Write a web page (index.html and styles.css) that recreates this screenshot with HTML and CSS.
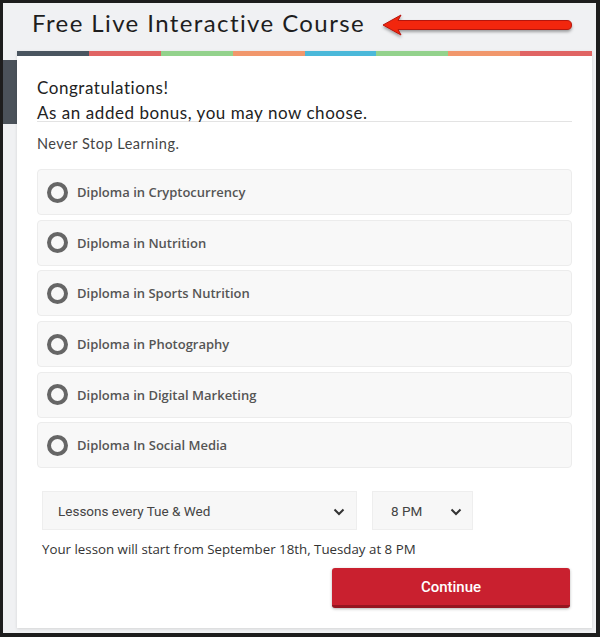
FILE: index.html
```html
<!DOCTYPE HTML><html>
<head>
  <title>Free Live Interactive Course</title>
  <meta name="viewport" content="width=device-width, initial-scale=1">
  <link rel="stylesheet" href="styles.css">
</head>
<body>
  <div class="page">
    <div class="topbar">
      <h1>Free Live Interactive Course</h1>
      <svg class="arrow" width="200" height="34" viewBox="0 0 200 34">
        <defs>
          <filter id="drop" x="-5%" y="-30%" width="110%" height="180%">
            <feDropShadow dx="0" dy="2" stdDeviation="1.5" flood-color="#000" flood-opacity="0.35"/>
          </filter>
        </defs>
        <path filter="url(#drop)" d="M2 16 L20 6 L17 11.5 L186 11.5 Q190.5 11.5 190.5 16 Q190.5 20.5 186 20.5 L17 20.5 L20 26 Z" fill="#f2280f" stroke="#b5150a" stroke-width="1" stroke-linejoin="round"/>
      </svg>
    </div>
    <div class="main">
      <div class="side"></div>
      <div class="card">
        <div class="stripe">
          <span class="s1"></span><span class="s2"></span><span class="s3"></span><span class="s4"></span>
          <span class="s5"></span><span class="s3"></span><span class="s4"></span><span class="s2"></span>
        </div>
        <div class="content">
          <div class="intro">
            <p>Congratulations!</p>
            <p>As an added bonus, you may now choose.</p>
          </div>
          <p class="tagline">Never Stop Learning.</p>
          <div class="options">
            <label class="option"><span class="radio"></span>Diploma in Cryptocurrency</label>
            <label class="option"><span class="radio"></span>Diploma in Nutrition</label>
            <label class="option"><span class="radio"></span>Diploma in Sports Nutrition</label>
            <label class="option"><span class="radio"></span>Diploma in Photography</label>
            <label class="option"><span class="radio"></span>Diploma in Digital Marketing</label>
            <label class="option"><span class="radio"></span>Diploma In Social Media</label>
          </div>
          <div class="selects">
            <div class="select days">
              <span>Lessons every Tue &amp; Wed</span>
              <svg class="chev" width="12" height="8" viewBox="0 0 12 8"><path d="M1.5 1.5 L6 6 L10.5 1.5" fill="none" stroke="#333" stroke-width="2"/></svg>
            </div>
            <div class="select time">
              <span>8 PM</span>
              <svg class="chev" width="12" height="8" viewBox="0 0 12 8"><path d="M1.5 1.5 L6 6 L10.5 1.5" fill="none" stroke="#333" stroke-width="2"/></svg>
            </div>
          </div>
          <p class="note">Your lesson will start from September 18th, Tuesday at 8 PM</p>
          <div class="actions">
            <button class="button">Continue</button>
          </div>
        </div>
      </div>
    </div>
  </div>
</body>
</html>
```

FILE: styles.css
```css
html {
  font-family: "Open Sans", Arial, sans-serif;
}
body {
  margin: 0;
  background-color: #1d1d1d;
}
p {
  margin: 0;
}
.page {
  margin: 3px 4px 4px 3px;
  height: 630px;
  background-color: #f0f1f3;
  overflow: hidden;
}
.topbar {
  height: 48px;
  display: flex;
  align-items: flex-start;
}
.topbar h1 {
  margin: 5px 0 0 29px;
  font-family: Lato, sans-serif;
  font-weight: 400;
  font-size: 24px;
  line-height: 30px;
  color: #1e1e1e;
  letter-spacing: 1.4px;
}
.arrow {
  margin: 6px 0 0 16px;
}
.main {
  display: flex;
  align-items: flex-start;
}
.side {
  width: 14px;
  height: 64px;
  margin-top: 9px;
  background-color: #4b525a;
}
.card {
  width: 575px;
  height: 577px;
  background-color: #fff;
  box-shadow: 0 1px 3px rgba(0,0,0,.12);
}
.stripe {
  display: flex;
  height: 5px;
}
.stripe span {
  flex: 1;
}
.s1 { background-color: #4a5560; }
.s2 { background-color: #e06463; }
.s3 { background-color: #93d28c; }
.s4 { background-color: #f1976c; }
.s5 { background-color: #4bb8d9; }
.content {
  padding: 0 20px;
}
.intro {
  padding-top: 21px;
  border-bottom: 1px solid #e3e3e3;
  font-family: Lato, sans-serif;
  font-size: 17px;
  line-height: 21px;
  color: #222;
  letter-spacing: 0.55px;
}
.intro p {
  margin-bottom: 4px;
}
.intro p:last-child {
  margin-bottom: -2px;
}
.tagline {
  margin-top: 12px;
  font-family: Lato, sans-serif;
  font-size: 14.5px;
  line-height: 20px;
  color: #444;
  letter-spacing: 0.5px;
}
.options {
  margin-top: 15px;
  display: flex;
  flex-direction: column;
  gap: 4.7px;
}
.option {
  height: 46px;
  box-sizing: border-box;
  display: flex;
  align-items: center;
  padding-left: 9px;
  background-color: #f8f8f8;
  border: 1px solid #ececec;
  border-radius: 4px;
  font-size: 13px;
  font-weight: 600;
  color: #555;
}
.radio {
  width: 21px;
  height: 21px;
  box-sizing: border-box;
  border: 4px solid #666;
  border-radius: 50%;
  margin-right: 9px;
}
.selects {
  display: flex;
  gap: 15px;
  margin: 23px 0 0 5px;
}
.select {
  height: 39px;
  box-sizing: border-box;
  display: flex;
  align-items: center;
  justify-content: space-between;
  background-color: #f7f7f7;
  border: 1px solid #eeeeee;
  font-family: Roboto, sans-serif;
  font-size: 13.5px;
  color: #444;
}
.days {
  width: 315px;
  padding: 0 11px 0 15px;
}
.time {
  width: 101px;
  padding: 0 10px 0 18px;
}
.chev {
  margin-top: 2px;
}
.note {
  margin: 9px 0 0 5px;
  font-size: 13.3px;
  line-height: 20px;
  color: #333;
}
.actions {
  display: flex;
  justify-content: flex-end;
  margin: 9px 2px 0 0;
}
.button {
  width: 238px;
  height: 40px;
  padding: 0;
  border: none;
  border-bottom: 3px solid #951520;
  border-radius: 3px;
  background-color: #c9202f;
  box-shadow: 0 1px 3px rgba(0,0,0,.3);
  font-family: Roboto, sans-serif;
  font-size: 15px;
  font-weight: 500;
  color: #fff;
}
```
